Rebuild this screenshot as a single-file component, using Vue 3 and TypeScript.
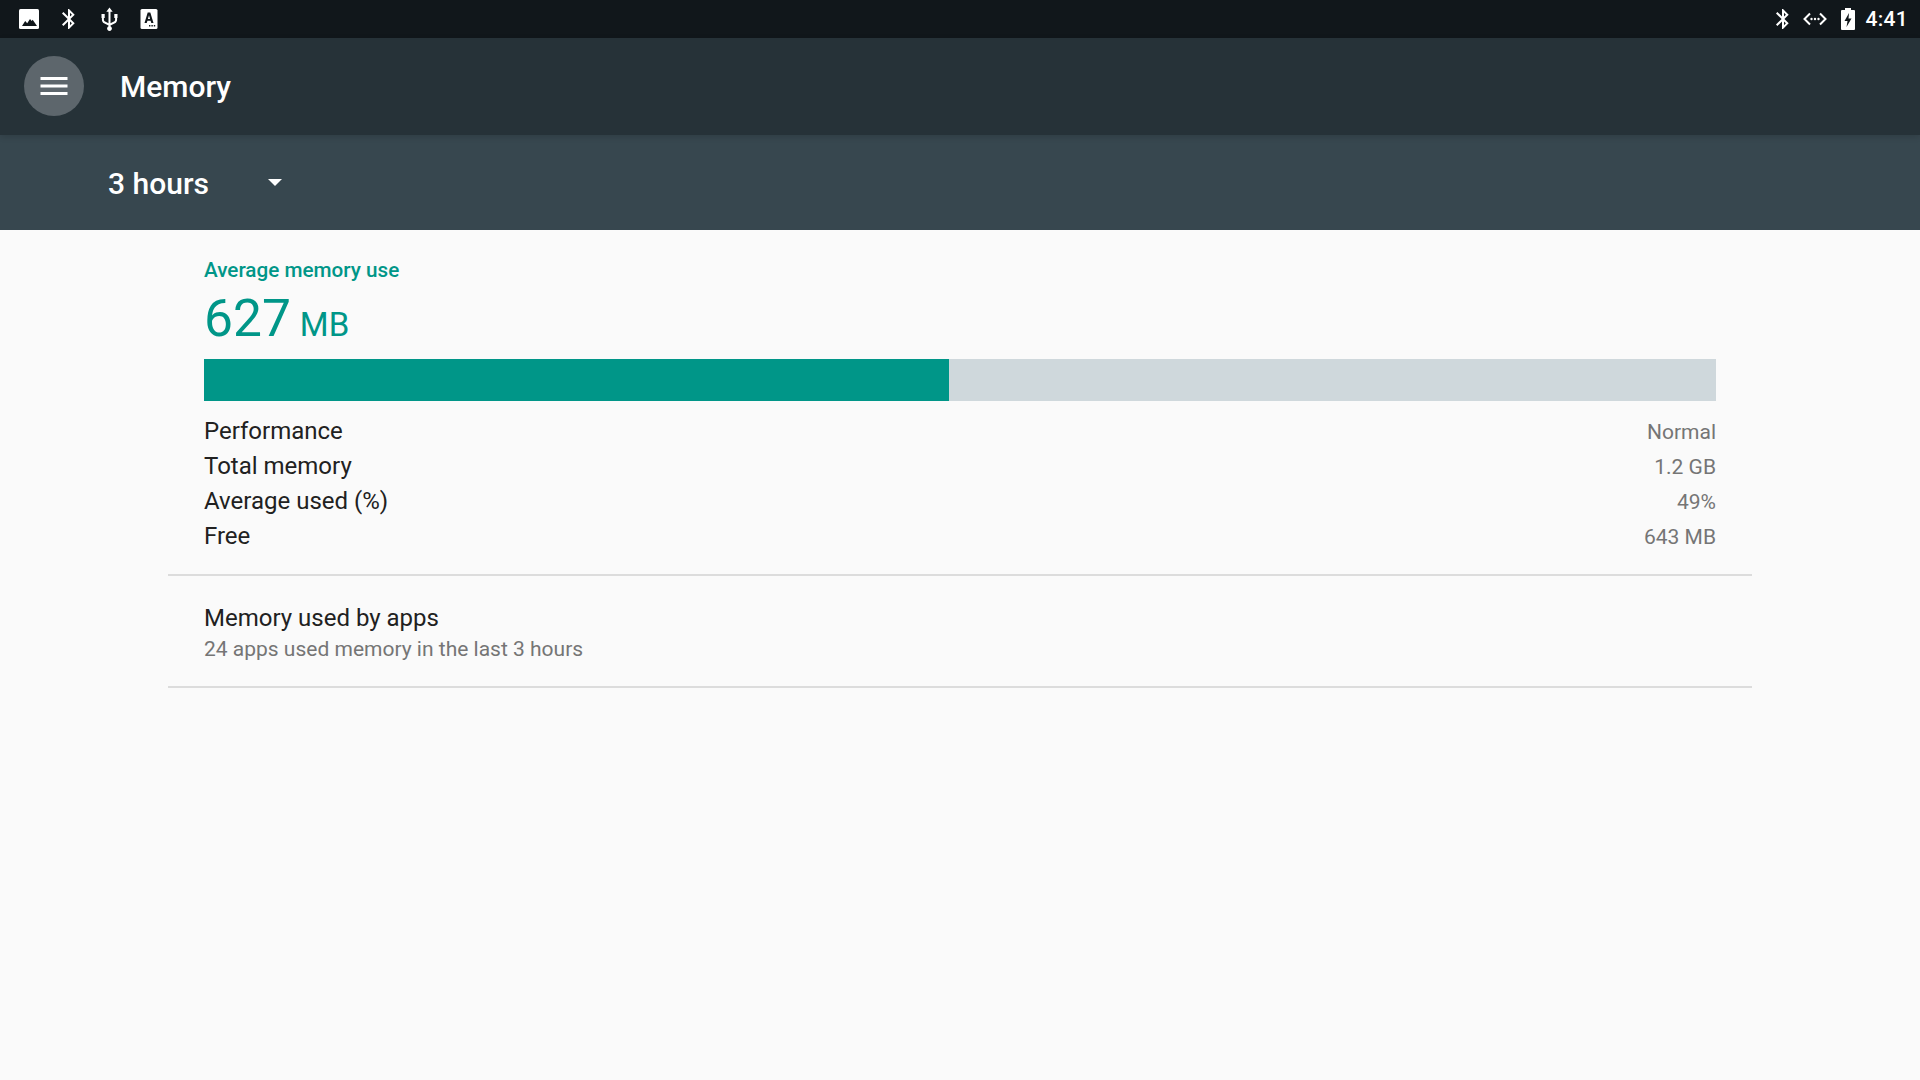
<script setup lang="ts">
const rows: { label: string; value: string }[] = [
  { label: 'Performance', value: 'Normal' },
  { label: 'Total memory', value: '1.2 GB' },
  { label: 'Average used (%)', value: '49%' },
  { label: 'Free', value: '643 MB' },
]
</script>

<template>
  <div class="screen">
    <div class="status">
      <div class="status-left">
        <svg class="ico" width="24" height="24" viewBox="0 0 24 24"><rect x="2" y="2" width="20" height="20" rx="1.500" fill="#fff"/><path fill="#11171b" d="M5 19l3.200-5 2 2.300 2.800-4.300 1.700 2 1-1.200L20 19z"/></svg>
        <svg class="ico" width="24" height="24" viewBox="0 0 24 24"><path fill="#fff" d="M17.700 7.700 12 2h-1v7.600L6.400 5 5 6.400l5.600 5.600L5 17.600 6.400 19l4.600-4.600V22h1l5.700-5.700-4.300-4.300 4.300-4.300zM13 5.800l1.900 1.900L13 9.600V5.800zm1.900 10.500L13 18.200v-3.800l1.900 1.900z"/></svg>
        <svg class="ico" width="24" height="24" viewBox="0 0 24 24"><path fill="#fff" d="M12.500.5l3.200 4.300h-2.200V19.300a2.400 2.400 0 1 1-2 0V4.800H9.300zM4.500 7h3.200v4H6.900v1.800c0 .8.500 1.300 1.200 1.700l3.400 1.800v2.300L7 16.300c-1.300-.7-2.100-1.900-2.100-3.500V11h-.4zM17.300 7h3.200v4h-.4v1.800c0 1.600-.8 2.800-2.100 3.500l-4.500 2.300v-2.300l3.400-1.800c.7-.4 1.200-.9 1.200-1.700V11h-.8z"/></svg>
        <svg class="ico" width="24" height="24" viewBox="0 0 24 24"><rect x="3.500" y="2" width="17" height="20" rx="1.500" fill="#fff"/><path fill="#11171b" fill-rule="evenodd" d="M10.700 5.500h2.600l3.200 10.500h-2.200l-.7-2.300h-3.200L9.700 16H7.500zM12 8.200l-1.100 3.700h2.200zM12 18h1.400v1.400H12zM14.400 18h1.400v1.400h-1.400zM16.800 18h1.400v1.400h-1.400z"/></svg>
      </div>
      <div class="status-right">
        <svg class="ico" width="24" height="24" viewBox="0 0 24 24"><path fill="#fff" d="M17.700 7.700 12 2h-1v7.600L6.400 5 5 6.400l5.600 5.600L5 17.600 6.400 19l4.600-4.600V22h1l5.700-5.700-4.300-4.300 4.300-4.300zM13 5.800l1.900 1.900L13 9.600V5.800zm1.900 10.500L13 18.200v-3.800l1.900 1.900z"/></svg>
        <svg class="ico swap" width="26" height="24" viewBox="0 0 26 24"><path fill="none" stroke="#fff" stroke-width="2" d="M8 6.500 2.500 12 8 17.500M18 6.500l5.500 5.500-5.500 5.500"/><circle cx="9.500" cy="12" r="1.200" fill="#fff"/><circle cx="13" cy="12" r="1.200" fill="#fff"/><circle cx="16.500" cy="12" r="1.200" fill="#fff"/></svg>
        <svg class="ico batt" width="16" height="24" viewBox="0 0 16 24"><path fill="#fff" fill-rule="evenodd" d="M5 1h6v2h3a1 1 0 0 1 1 1v18a1 1 0 0 1-1 1H2a1 1 0 0 1-1-1V4a1 1 0 0 1 1-1h3zM9 6 4.500 14H7.500l-1 6 5-8.500H8.500z"/></svg>
        <span class="clock">4:41</span>
      </div>
    </div>

    <header class="toolbar">
      <div class="menu-btn">
        <svg width="36" height="36" viewBox="0 0 36 36"><path fill="#fff" d="M4.500 9h27v3h-27zM4.500 16.500h27v3h-27zM4.500 24h27v3h-27z"/></svg>
      </div>
      <span class="title">Memory</span>
    </header>

    <div class="range">
      <span class="range-label">3 hours</span>
      <span class="caret"></span>
    </div>

    <main class="content">
      <section class="summary">
        <div class="heading">Average memory use</div>
        <div class="amount"><span class="big">627</span><span class="unit">MB</span></div>
        <div class="bar"><div class="bar-fill" :style="{ width: '49.300%' }"></div></div>
        <div class="rows">
          <div v-for="r in rows" :key="r.label" class="row">
            <span class="row-label">{{ r.label }}</span>
            <span class="row-value">{{ r.value }}</span>
          </div>
        </div>
      </section>
      <section class="apps">
        <div class="apps-title">Memory used by apps</div>
        <div class="apps-sub">24 apps used memory in the last 3 hours</div>
      </section>
    </main>
  </div>
</template>

<style>
html, body { margin: 0; background: #fafafa; }
</style>

<style scoped>
.screen {
  width: 1920px;
  height: 1080px;
  display: flex;
  flex-direction: column;
  background: #fafafa;
  font-family: Roboto, "Liberation Sans", sans-serif;
  overflow: hidden;
}
.status {
  height: 38px;
  background: #11171b;
  display: flex;
  justify-content: space-between;
  align-items: center;
  padding: 0 12px 0 17px;
  flex: none;
}
.status-left { display: flex; gap: 16px; align-items: center; }
.status-right { display: flex; align-items: center; color: #fff; }
.ico { display: block; }
.swap { margin-left: 7px; }
.batt { margin-left: 12px; }
.clock { font-size: 21px; font-weight: 500; margin-left: 9px; letter-spacing: .3px; }
.toolbar {
  height: 97px;
  flex: none;
  background: #263238;
  display: flex;
  align-items: center;
  padding-left: 24px;
  box-shadow: 0 2px 6px rgba(0, 0, 0, .14);
  position: relative;
}
.menu-btn {
  width: 60px;
  height: 60px;
  border-radius: 50%;
  background: #5d666c;
  display: flex;
  align-items: center;
  justify-content: center;
  margin-bottom: 1px;
}
.title {
  color: #fff;
  font-size: 30px;
  font-weight: 500;
  margin-left: 36px;
}
.range {
  height: 95px;
  flex: none;
  background: #37474f;
  display: flex;
  align-items: center;
  padding-left: 108px;
}
.range-label { color: #fff; font-size: 30px; font-weight: 500; width: 160px; padding-top: 2px; }
.caret {
  width: 0;
  height: 0;
  border-left: 7.500px solid transparent;
  border-right: 7.500px solid transparent;
  border-top: 7.500px solid #fff;
  margin-bottom: 1px;
}
.content { margin: 0 168px; flex: 1; }
.summary {
  padding: 28px 36px 0;
  height: 346px;
  box-sizing: border-box;
  border-bottom: 2px solid #dcdcdc;
}
.heading { color: #009688; font-size: 20.700px; font-weight: 500; line-height: 24px; }
.amount { color: #009688; line-height: 68px; height: 68px; margin-top: 3px; }
.big { font-size: 51.500px; }
.unit { font-size: 33px; margin-left: 9px; }
.bar { height: 42px; background: #cfd8dc; margin-top: 6px; }
.bar-fill { height: 100%; background: #009688; }
.rows { margin-top: 12px; }
.row {
  height: 35px;
  display: flex;
  justify-content: space-between;
  align-items: center;
}
.row-label { color: #212121; font-size: 24px; }
.row-value { color: #757575; font-size: 21px; padding-top: 2px; }
.apps {
  height: 112px;
  box-sizing: border-box;
  padding: 26px 36px 0;
  border-bottom: 2px solid #dcdcdc;
}
.apps-title { color: #212121; font-size: 24px; line-height: 32px; }
.apps-sub { color: #757575; font-size: 21px; line-height: 28px; margin-top: 1px; }
</style>
